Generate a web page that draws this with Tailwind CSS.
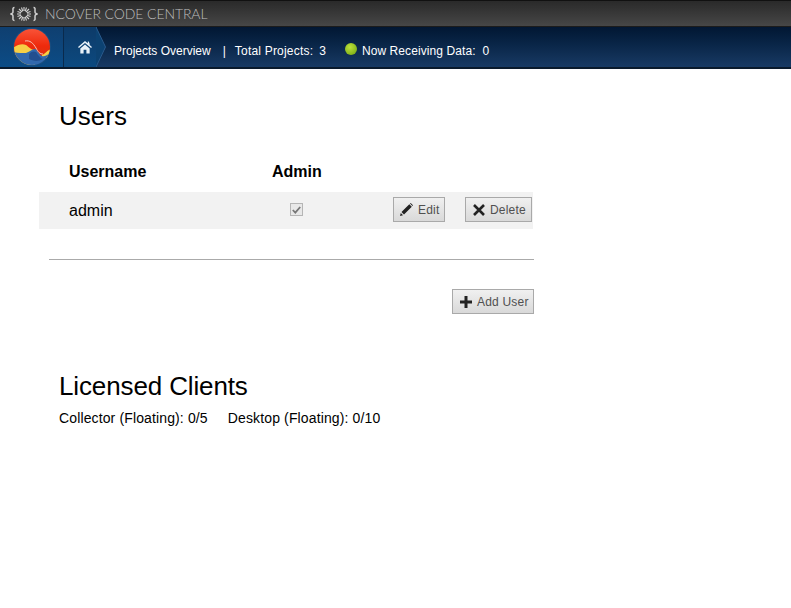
<!DOCTYPE html>
<html lang="en">
<head>
    <meta charset="UTF-8">
    <title>NCover Code Central</title>
    <script src="https://cdn.jsdelivr.net/npm/@tailwindcss/browser@4"></script>
</head>
<body class="bg-white text-black font-['Liberation_Sans',Arial,sans-serif]">

    <!-- Top brand bar -->
    <div class="h-[27px] flex items-center pl-[10px] bg-gradient-to-b from-[#2a2a2a] to-[#474747] border-t border-t-[#111] border-b border-b-[#1c1c1c]">
        <svg width="28" height="16" viewBox="0 0 28 16" fill="none" stroke="#d0d0d0">
            <path d="M4.500 1.500C2.500 1.500 3 3 3 5S3 7 1 8C3 9 3 9 3 11s-.5 3.500 1.500 3.500M23.500 1.500c2 0 1.500 1.500 1.500 3.500s0 2 2 3c-2 1-2 1-2 3s.5 3.500-1.500 3.500" stroke-width="1.500"/>
            <path d="M14 1v4M14 11v4M7 8h4M17 8h4M9 3l3 3M19 3l-3 3M9 13l3-3M19 13l-3-3M11.500 1.500l1.300 3.700M16.500 1.500l-1.300 3.700M11.500 14.500l1.300-3.700M16.500 14.500l-1.300-3.700M7.500 5.500l3.500 1.300M20.500 5.500l-3.500 1.300M7.500 10.500l3.500-1.300M20.500 10.500l-3.500-1.300" stroke-width="1.100"/>
        </svg>
        <span class="ml-[7px] text-[14px] leading-none tracking-[-0.1px] text-[#bdbdbd] font-['Lato',sans-serif] font-light">NCOVER CODE CENTRAL</span>
    </div>

    <!-- Nav bar -->
    <div class="h-[42px] flex items-stretch bg-gradient-to-b from-[#021733] to-[#183a64] border-b-2 border-b-[#0a1a2c] text-white text-[12px]">
        <div class="w-[64px] flex items-center justify-center bg-gradient-to-b from-[#0f3f70] to-[#0b4c86] border-r border-r-[#0a2a4c]">
            <svg width="38" height="38" viewBox="0 0 38 38">
                <defs>
                    <clipPath id="logoClip"><circle cx="19" cy="19" r="18"/></clipPath>
                    <linearGradient id="logoRed" x1="0" y1="0" x2="0" y2="1">
                        <stop offset="0" stop-color="#f9553a"/>
                        <stop offset="0.6" stop-color="#ee2a0c"/>
                        <stop offset="1" stop-color="#d8330f"/>
                    </linearGradient>
                </defs>
                <circle cx="19" cy="19" r="19" fill="#1c4f80"/>
                <g clip-path="url(#logoClip)">
                    <rect width="38" height="30" fill="url(#logoRed)"/>
                    <path d="M0 38V20C4 17 9 15 13 17C16 19 18 22 22 22V38Z" fill="#f6cf45"/>
                    <path d="M29 27C32 26 33 23 38 21V30H29Z" fill="#f6cf45"/>
                    <path d="M0 38V24C4 25 9 25 13 25C16 24 19 21 22 21C25 22 26 27 29 28C32 29 35 26 38 25V38Z" fill="#3168ad"/>
                    <path d="M16 26C19 23 21 23 23 24C25 27 27 30 30 31C25 34 20 33 16 31Z" fill="#234f8f"/>
                    <path d="M12 13C17 12 20 15 23 20C25 24 27 26 30 26" fill="none" stroke="#f8c3b5" stroke-width="1"/>
                </g>
            </svg>
        </div>
        <div class="w-[33px] flex items-center pl-[14px] bg-gradient-to-b from-[#0d3a68] to-[#0c4a80]">
            <svg width="14" height="14" viewBox="0 0 15 14" fill="#e8f1f8">
                <path d="M7.500 0.500L0 7l1 1.200L7.500 2.600 14 8.200 15 7l-2.500-2.200V3.500L11.500 1h-1v2z"/>
                <path d="M2.500 8.500L7.500 4.200l5 4.300V14H9V10H6V14H2.500z"/>
            </svg>
        </div>
        <svg class="-ml-[1px]" width="10" height="40" viewBox="0 0 10 40">
            <path d="M0 0L9.500 20L0 40Z" fill="#0c4272"/>
            <path d="M0 0L9.500 20L0 40" fill="none" stroke="#2a5a8c"/>
        </svg>
        <div class="flex items-center pl-[8px] pt-[7px] whitespace-pre">
            <span>Projects Overview</span>
            <span class="ml-[12px]">|</span>
            <span class="ml-[9px] tracking-[0.2px]">Total Projects:</span>
            <span class="ml-[6px]">3</span>
            <span class="ml-[19px] -mt-[3px] w-[12px] h-[12px] rounded-full bg-[radial-gradient(circle_at_40%_35%,#bde13a,#6fa30f)]"></span>
            <span class="ml-[5px] tracking-[0.09px]">Now Receiving Data:&nbsp; 0</span>
        </div>
    </div>

    <!-- Users -->
    <div class="w-[534px] pl-[39px]">
        <h1 class="pl-[20px] mt-[31px] text-[26px] leading-[32px]">Users</h1>
        <div class="mt-[28px] flex h-[24px] items-center pl-[30px] text-[16px] font-bold">
            <span class="w-[203px]">Username</span>
            <span>Admin</span>
        </div>
        <div class="mt-[8px] h-[37px] w-[494px] bg-[#f2f2f2] flex items-center pl-[30px] text-[16px]">
            <span class="w-[221px]">admin</span>
            <span class="-mt-[2px] w-[13px] h-[13px] flex items-center justify-center border border-[#b5b5b5] bg-[#e8e8e8]">
                <svg width="9" height="8" viewBox="0 0 9 8" fill="none" stroke="#777" stroke-width="1.800"><path d="M.8 4l2.500 2.600L8.200 1"/></svg>
            </span>
            <button class="-mt-[2px] ml-[90px] h-[25px] w-[52px] flex items-center pl-[6px] gap-[5px] border border-[#a9a9a9] bg-gradient-to-b from-[#f0f0f0] to-[#d9d9d9] text-[12px] tracking-[0.2px] text-[#505050]">
                <svg width="13" height="13" viewBox="0 0 13 13" fill="#222"><path d="M0 13l.8-3 2.200 2.200zM1.500 9l7.800-7.800 2.500 2.500L4 11.500zM10 .5l.7-.5 2.300 2.300-.6.7z"/></svg>
                Edit
            </button>
            <button class="-mt-[2px] ml-[20px] h-[25px] w-[67px] flex items-center pl-[7px] gap-[5px] border border-[#a9a9a9] bg-gradient-to-b from-[#f0f0f0] to-[#d9d9d9] text-[12px] tracking-[0.2px] text-[#505050]">
                <svg width="12" height="12" viewBox="0 0 12 12" fill="none" stroke="#222" stroke-width="2.600"><path d="M1 1l10 10M11 1L1 11"/></svg>
                Delete
            </button>
        </div>
        <div class="ml-[10px] mt-[30px] border-t border-t-[#aaa]"></div>
        <div class="mt-[29px] flex justify-end">
            <button class="h-[25px] w-[82px] flex items-center pl-[7px] gap-[5px] border border-[#a9a9a9] bg-gradient-to-b from-[#f0f0f0] to-[#d9d9d9] text-[12px] tracking-[0.2px] text-[#505050]">
                <svg width="12" height="12" viewBox="0 0 12 12" fill="#222"><path d="M4.500 0h3v4.500H12v3H7.500V12h-3V7.500H0v-3h4.500z"/></svg>
                Add User
            </button>
        </div>

        <!-- Licensed clients -->
        <h1 class="pl-[20px] mt-[56px] text-[26px] leading-[32px] tracking-[-0.13px]">Licensed Clients</h1>
        <div class="pl-[20px] mt-[8px] text-[14px] leading-[16px] tracking-[0.13px] whitespace-nowrap">
            <span>Collector (Floating): 0/5</span>
            <span class="ml-[16px]">Desktop (Floating): 0/10</span>
        </div>
    </div>
</body>
</html>
